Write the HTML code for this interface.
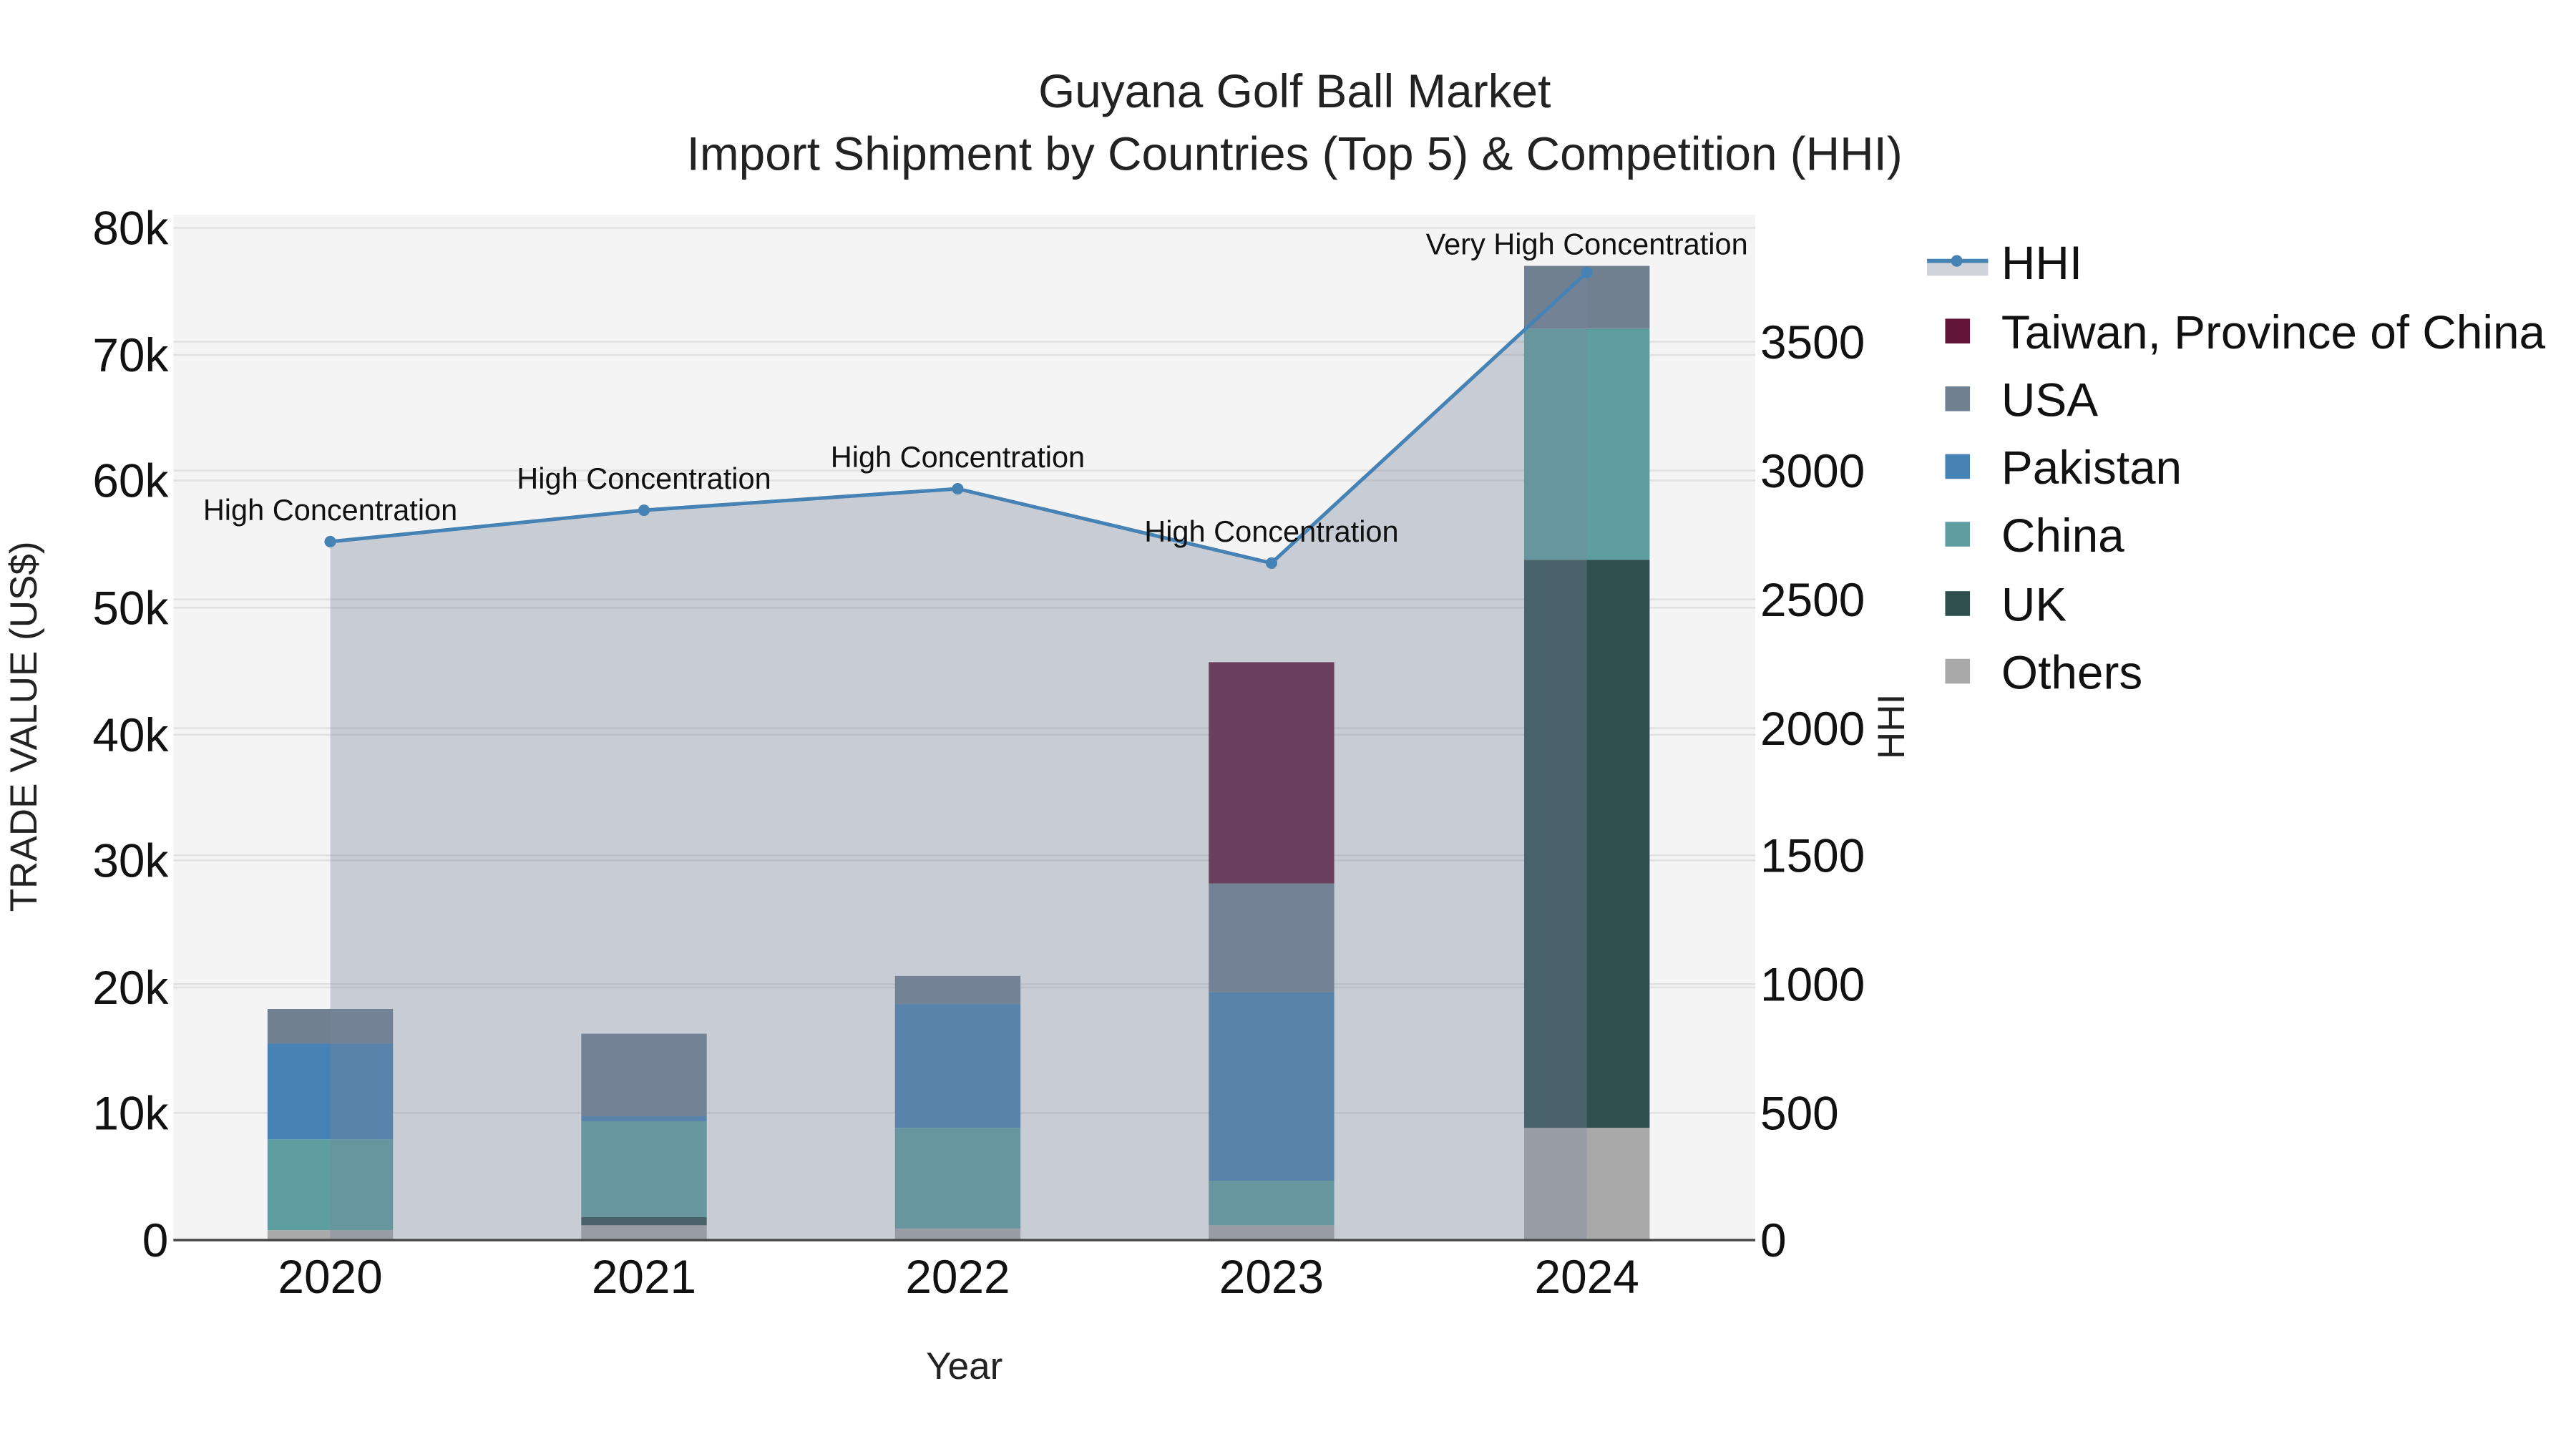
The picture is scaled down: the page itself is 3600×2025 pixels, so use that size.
<!DOCTYPE html>
<html><head><meta charset="utf-8"><style>html,body{margin:0;padding:0;background:#fff}svg{display:block}</style></head>
<body>
<svg width="3600" height="2025" viewBox="0 0 1560 877.5" xmlns="http://www.w3.org/2000/svg" font-family="Liberation Sans, Arial, sans-serif">
<rect x="0" y="0" width="1560" height="877.5" fill="#fff"/>
<rect x="105" y="130" width="958" height="621" fill="#f4f4f4"/>
<g stroke="#e2e2e2" stroke-width="1.2">
<line x1="105" x2="1063" y1="138" y2="138"/><line x1="105" x2="1063" y1="215" y2="215"/><line x1="105" x2="1063" y1="291" y2="291"/><line x1="105" x2="1063" y1="368" y2="368"/><line x1="105" x2="1063" y1="445" y2="445"/><line x1="105" x2="1063" y1="521" y2="521"/><line x1="105" x2="1063" y1="598" y2="598"/><line x1="105" x2="1063" y1="674" y2="674"/>
<line x1="105" x2="1063" y1="207" y2="207"/><line x1="105" x2="1063" y1="285" y2="285"/><line x1="105" x2="1063" y1="363" y2="363"/><line x1="105" x2="1063" y1="441" y2="441"/><line x1="105" x2="1063" y1="518" y2="518"/><line x1="105" x2="1063" y1="596" y2="596"/>
</g>
<g>
<rect x="162" y="745" width="76" height="6" fill="#a9a9a9"/><rect x="162" y="690" width="76" height="55" fill="#5f9ea0"/><rect x="162" y="632" width="76" height="58" fill="#4682b4"/><rect x="162" y="611" width="76" height="21" fill="#708090"/>
<rect x="352" y="742" width="76" height="9" fill="#a9a9a9"/><rect x="352" y="737" width="76" height="5" fill="#2f4f4f"/><rect x="352" y="679" width="76" height="58" fill="#5f9ea0"/><rect x="352" y="676" width="76" height="3" fill="#4682b4"/><rect x="352" y="626" width="76" height="50" fill="#708090"/>
<rect x="542" y="744" width="76" height="7" fill="#a9a9a9"/><rect x="542" y="683" width="76" height="61" fill="#5f9ea0"/><rect x="542" y="608" width="76" height="75" fill="#4682b4"/><rect x="542" y="591" width="76" height="17" fill="#708090"/>
<rect x="732" y="742" width="76" height="9" fill="#a9a9a9"/><rect x="732" y="715" width="76" height="27" fill="#5f9ea0"/><rect x="732" y="601" width="76" height="114" fill="#4682b4"/><rect x="732" y="535" width="76" height="66" fill="#708090"/><rect x="732" y="401" width="76" height="134" fill="#63163a"/>
<rect x="923" y="683" width="76" height="68" fill="#a9a9a9"/><rect x="923" y="339" width="76" height="344" fill="#2f4f4f"/><rect x="923" y="199" width="76" height="140" fill="#5f9ea0"/><rect x="923" y="161" width="76" height="38" fill="#708090"/>
</g>
<path d="M200,328 L390,309 L580,296 L770,341 L961,165 L961,751 L200,751 Z" fill="rgba(122,136,158,0.36)"/>
<polyline points="200,328 390,309 580,296 770,341 961,165" fill="none" stroke="#4682b4" stroke-width="2.2"/>
<g fill="#4682b4"><circle cx="200" cy="328" r="3.5"/><circle cx="390" cy="309" r="3.5"/><circle cx="580" cy="296" r="3.5"/><circle cx="770" cy="341" r="3.5"/><circle cx="961" cy="165" r="3.5"/></g>
<line x1="105" x2="1063" y1="751" y2="751" stroke="#444" stroke-width="1.5"/>
<g font-size="18" text-anchor="middle" fill="#111">
<text x="200" y="315">High Concentration</text><text x="390" y="296">High Concentration</text><text x="580" y="283">High Concentration</text><text x="770" y="328">High Concentration</text><text x="961" y="154">Very High Concentration</text>
</g>
<g text-anchor="middle" fill="#222" font-size="28.5">
<text x="784" y="65">Guyana Golf Ball Market</text>
<text x="784" y="103">Import Shipment by Countries (Top 5) &amp; Competition (HHI)</text>
</g>
<g font-size="28.5" fill="#111" text-anchor="end">
<text x="102" y="148">80k</text><text x="102" y="225">70k</text><text x="102" y="301">60k</text><text x="102" y="378">50k</text><text x="102" y="455">40k</text><text x="102" y="531">30k</text><text x="102" y="608">20k</text><text x="102" y="684">10k</text><text x="102" y="761">0</text>
</g>
<g font-size="28.5" fill="#111">
<text x="1066" y="217">3500</text><text x="1066" y="295">3000</text><text x="1066" y="373">2500</text><text x="1066" y="451">2000</text><text x="1066" y="528">1500</text><text x="1066" y="606">1000</text><text x="1066" y="684">500</text><text x="1066" y="761">0</text>
</g>
<g font-size="28.5" fill="#111" text-anchor="middle">
<text x="200" y="783">2020</text><text x="390" y="783">2021</text><text x="580" y="783">2022</text><text x="770" y="783">2023</text><text x="961" y="783">2024</text>
</g>
<text x="584" y="835" font-size="23" text-anchor="middle" fill="#222">Year</text>
<text transform="translate(22,440) rotate(-90)" font-size="23" text-anchor="middle" fill="#222">TRADE VALUE (US$)</text>
<text transform="translate(1153,440) rotate(-90)" font-size="23" text-anchor="middle" fill="#222">HHI</text>
<rect x="1167" y="159" width="37" height="8" fill="#d0d4da"/>
<line x1="1167" x2="1204" y1="158" y2="158" stroke="#4682b4" stroke-width="2.5"/><circle cx="1185" cy="158" r="3.5" fill="#4682b4"/>
<g font-size="28.5" fill="#111">
<text x="1212" y="169">HHI</text><text x="1212" y="211">Taiwan, Province of China</text><text x="1212" y="252">USA</text><text x="1212" y="293">Pakistan</text><text x="1212" y="334">China</text><text x="1212" y="376">UK</text><text x="1212" y="417">Others</text>
</g>
<rect x="1178" y="193" width="15" height="15" fill="#63163a"/>
<rect x="1178" y="234" width="15" height="15" fill="#708090"/>
<rect x="1178" y="275" width="15" height="15" fill="#4682b4"/>
<rect x="1178" y="316" width="15" height="15" fill="#5f9ea0"/>
<rect x="1178" y="358" width="15" height="15" fill="#2f4f4f"/>
<rect x="1178" y="399" width="15" height="15" fill="#a9a9a9"/>
</svg>
</body></html>
